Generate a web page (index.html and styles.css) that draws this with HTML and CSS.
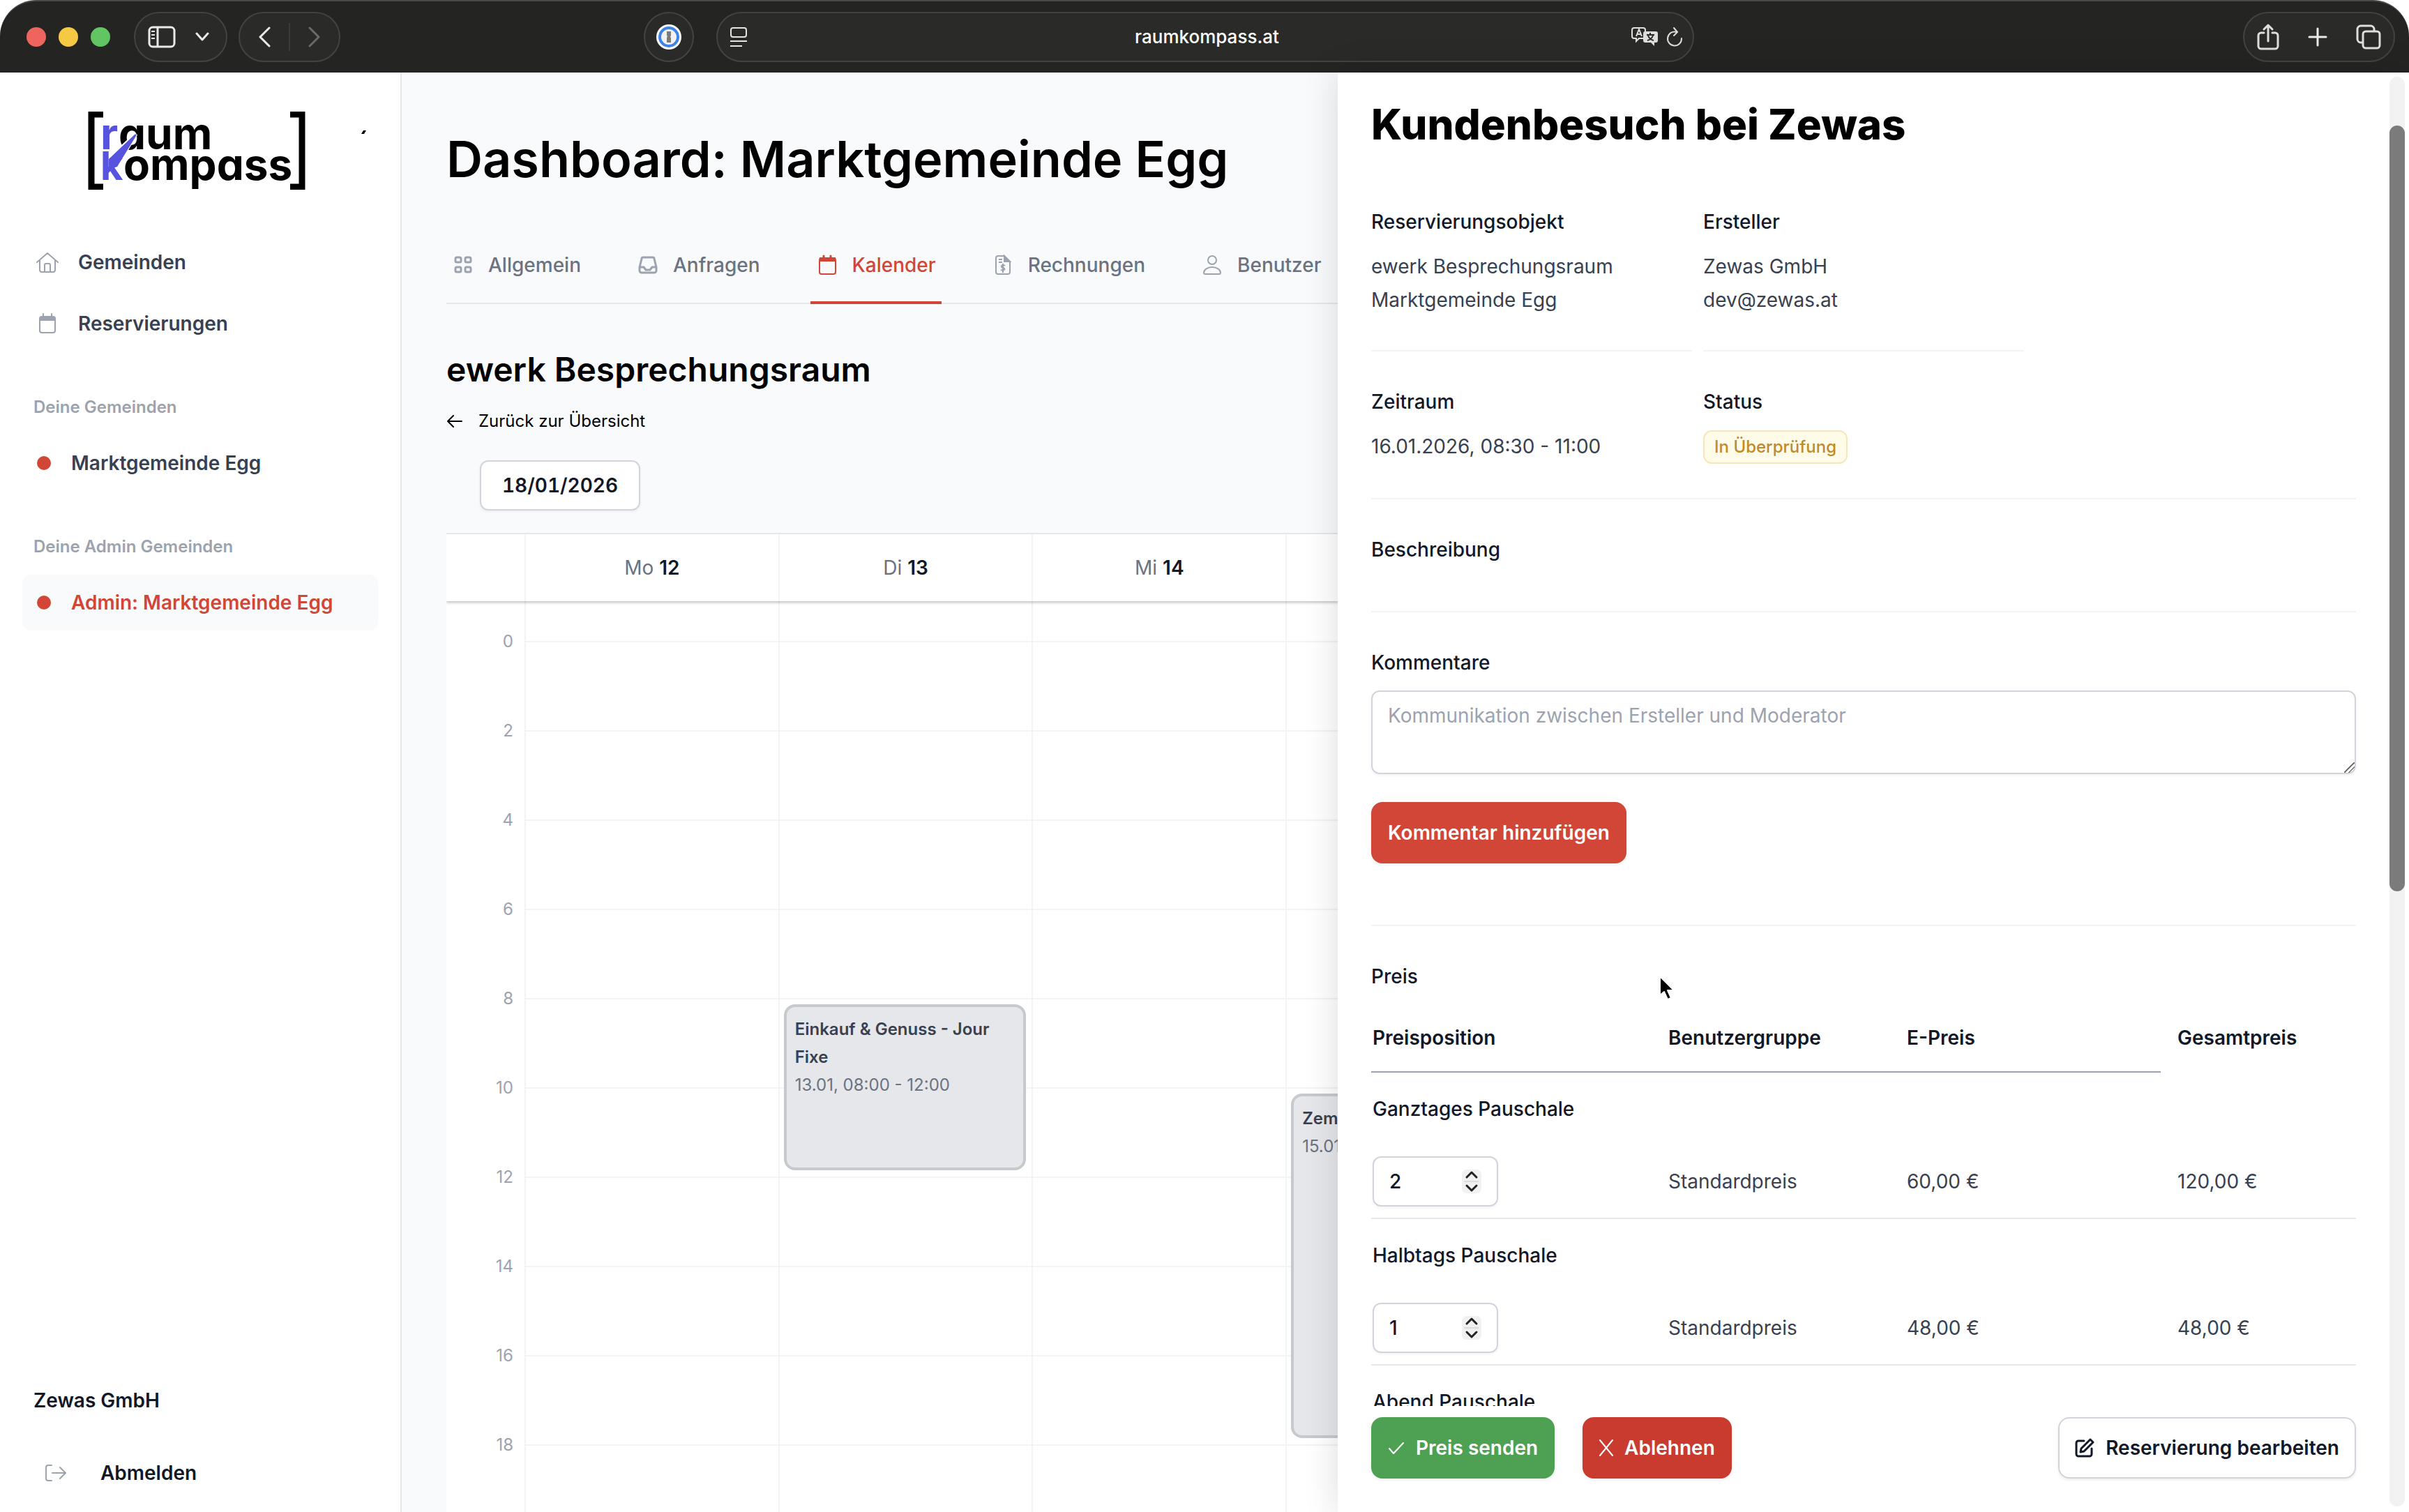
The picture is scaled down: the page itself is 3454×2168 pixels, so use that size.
FILE: index.html
```html
<!DOCTYPE html>
<html lang="de">
<head>
<meta charset="utf-8">
<title>raumkompass.at</title>
<link rel="stylesheet" href="styles.css">
</head>
<body>
<div class="window">
  <header class="toolbar">
    <div class="toolbar-side">
      <div class="lights"><span class="light light-red"></span><span class="light light-yellow"></span><span class="light light-green"></span></div>
      <div class="pill pill-sidebar">
        <svg width="40" height="32" viewBox="0 0 40 32" fill="none" stroke="#e9e9e8" stroke-width="3"><rect x="2" y="2" width="36" height="28" rx="5"/><path d="M14 2v28"/><path d="M5 8h5M5 13h5M5 18h5" stroke-width="2"/></svg>
        <svg width="20" height="14" viewBox="0 0 20 14" fill="none" stroke="#e9e9e8" stroke-width="3" stroke-linecap="round" stroke-linejoin="round"><path d="M2 2l8 9 8-9"/></svg>
      </div>
      <div class="pill pill-nav">
        <svg width="18" height="32" viewBox="0 0 18 32" fill="none" stroke="#e9e9e8" stroke-width="3" stroke-linecap="round" stroke-linejoin="round"><path d="M16 3L3 16l13 13"/></svg>
        <span class="pill-divider"></span>
        <svg width="18" height="32" viewBox="0 0 18 32" fill="none" stroke="#6a6a68" stroke-width="3" stroke-linecap="round" stroke-linejoin="round"><path d="M2 3l13 13L2 29"/></svg>
      </div>
    </div>
    <div class="toolbar-center">
      <div class="pill pill-round">
        <svg width="36" height="36" viewBox="0 0 36 36"><circle cx="18" cy="18" r="18" fill="#fff"/><circle cx="18" cy="18" r="13" fill="#f1f1f1" stroke="#3f83e8" stroke-width="4"/><path d="M15 10h6v6l-1 2 1 1v7h-6v-7l1-2-1-1z" fill="#7b7b7b"/></svg>
      </div>
      <div class="pill address">
        <svg width="24" height="28" viewBox="0 0 24 28" fill="none" stroke="#e4e4e2" stroke-width="2"><rect x="1" y="1" width="22" height="13" rx="3"/><path d="M0 20h24M0 27h17"/></svg>
        <span class="address-text">raumkompass.at</span>
        <span class="address-tools">
          <svg width="38" height="28" viewBox="0 0 38 28"><path d="M4 1h13a3 3 0 0 1 3 3v3M17 16h-6l-4 4v-4H4a3 3 0 0 1-3-3V4a3 3 0 0 1 3-3" fill="none" stroke="#dededc" stroke-width="2"/><path d="M7 13l4-10 4 10M8 10h6" fill="none" stroke="#dededc" stroke-width="2"/><path d="M20 6h15a3 3 0 0 1 3 3v10a3 3 0 0 1-3 3h-2v5l-5-5h-8a3 3 0 0 1-3-3V9a3 3 0 0 1 3-3z" fill="#dededc"/><path d="M22 11h11M27 8v3M24 12c1 3 4 6 8 7M31 12c-1 3-4 6-8 7" fill="none" stroke="#2a2a28" stroke-width="2"/></svg>
          <svg width="24" height="30" viewBox="0 0 24 30" fill="none" stroke="#dededc" stroke-width="2" stroke-linecap="round"><path d="M15 8A10 10 0 1 0 22 17"/><path d="M11 2l5 6-5 5"/></svg>
        </span>
      </div>
    </div>
    <div class="toolbar-side toolbar-right">
      <div class="pill pill-actions">
        <svg width="32" height="38" viewBox="0 0 32 38" fill="none" stroke="#dededc" stroke-width="3" stroke-linecap="round" stroke-linejoin="round"><path d="M10 13H6a4 4 0 0 0-4 4v15a4 4 0 0 0 4 4h20a4 4 0 0 0 4-4V17a4 4 0 0 0-4-4h-4M16 25V3M10 8l6-6 6 6"/></svg>
        <svg width="28" height="28" viewBox="0 0 28 28" stroke="#e9e9e8" stroke-width="3" stroke-linecap="round"><path d="M14 2v24M2 14h24"/></svg>
        <svg width="36" height="36" viewBox="0 0 36 36" fill="none" stroke="#dededc" stroke-width="3"><rect x="10" y="10" width="24" height="24" rx="4"/><path d="M10 26H7a5 5 0 0 1-5-5V7a5 5 0 0 1 5-5h14a5 5 0 0 1 5 5v3"/></svg>
      </div>
    </div>
  </header>

  <div class="app">
    <aside class="sidebar">
      <svg class="logo" width="416" height="112" viewBox="0 0 416 112" role="img" aria-label="raum kompass">
        <path d="M22 4H5v104h17M290 4h17v104h-17" fill="none" stroke="#000" stroke-width="9"/>
        <g class="logo-text">
          <text x="44" y="54">aum</text>
          <text x="51" y="98">ompass</text>
          <path d="M31 67L69 32 41 79z" fill="#fff" stroke="#fff" stroke-width="5"/>
          <text x="18" y="54" fill="#5653df">r</text>
          <text class="logo-k" x="18" y="98" fill="#5653df">k</text>
        </g>
        <path d="M30 68L67 33l3-1-1 3L42 79l-12 4z" fill="#5653df"/>
        <path d="M392 32l3-5h4l-3 5z"/>
      </svg>
      <nav class="side-nav">
        <a class="side-link" href="#"><svg class="side-icon" width="32" height="32" viewBox="0 0 32 32" fill="none" stroke="#9ca3af" stroke-width="2" stroke-linejoin="round" stroke-linecap="round"><path d="M1 16L16 3l15 13M5 13v14a3 3 0 0 0 3 3h16a3 3 0 0 0 3-3V13M12 30V20a2 2 0 0 1 2-2h4a2 2 0 0 1 2 2v10"/></svg>Gemeinden</a>
        <a class="side-link" href="#"><svg class="side-icon" width="32" height="32" viewBox="0 0 32 32" fill="none" stroke="#9ca3af" stroke-width="2"><rect x="5" y="6" width="22" height="23" rx="3"/><path d="M5 9h22" stroke-width="6"/><path d="M10 2v5M22 2v5" stroke-linecap="round"/></svg>Reservierungen</a>
      </nav>
      <section class="side-group">
        <h2 class="side-label">Deine Gemeinden</h2>
        <a class="side-link" href="#"><span class="dot"></span>Marktgemeinde Egg</a>
      </section>
      <section class="side-group">
        <h2 class="side-label">Deine Admin Gemeinden</h2>
        <a class="side-link side-active" href="#"><span class="dot"></span>Admin: Marktgemeinde Egg</a>
      </section>
      <div class="side-footer">
        <p class="account">Zewas GmbH</p>
        <a class="logout" href="#"><svg width="32" height="32" viewBox="0 0 32 32" fill="none" stroke="#9ca3af" stroke-width="2" stroke-linecap="round" stroke-linejoin="round"><path d="M10 5H5a3 3 0 0 0-3 3v16a3 3 0 0 0 3 3h5M11 16h18M22 8l8 8-8 8"/></svg>Abmelden</a>
      </div>
    </aside>

    <main class="main">
      <h1 class="title">Dashboard: Marktgemeinde Egg</h1>
      <nav class="tabs">
        <a class="tab" href="#"><svg width="32" height="32" viewBox="0 0 32 32" fill="none" stroke="#9ca3af" stroke-width="3"><rect x="5" y="5" width="8" height="7" rx="2"/><rect x="19" y="5" width="8" height="7" rx="2"/><rect x="5" y="19" width="8" height="7" rx="2"/><rect x="19" y="19" width="8" height="7" rx="2"/></svg>Allgemein</a>
        <a class="tab" href="#"><svg width="32" height="32" viewBox="0 0 32 32" fill="none" stroke="#9ca3af" stroke-width="3" stroke-linejoin="round"><path d="M9 5h14a2 2 0 0 1 2 2l3 12v5a3 3 0 0 1-3 3H7a3 3 0 0 1-3-3v-5L7 7a2 2 0 0 1 2-2zM4 19h6l3 4h6l3-4h6"/></svg>Anfragen</a>
        <a class="tab tab-active" href="#"><svg width="32" height="32" viewBox="0 0 32 32" fill="none" stroke="#d14636" stroke-width="2"><rect x="5" y="6" width="23" height="23" rx="3"/><path d="M5 8h23" stroke-width="6"/><path d="M11 3v5M21 3v5" stroke-width="3" stroke-linecap="round"/></svg>Kalender</a>
        <a class="tab" href="#"><svg width="32" height="32" viewBox="0 0 32 32" fill="none" stroke="#9ca3af" stroke-width="2"><path d="M9 3h9l8 8v15a3 3 0 0 1-3 3H9a3 3 0 0 1-3-3V6a3 3 0 0 1 3-3z"/><path d="M18 3v8h8z" fill="#9ca3af"/><path d="M10 8h5M10 12h5M19 17c-5-3-7 2-3 3s3 5-3 3M16 14v13"/></svg>Rechnungen</a>
        <a class="tab" href="#"><svg width="32" height="32" viewBox="0 0 32 32" fill="none" stroke="#9ca3af" stroke-width="2" stroke-linejoin="round"><circle cx="16" cy="9" r="6"/><path d="M4 27a12 8 0 0 1 24 0c0 2-2 2-2 2H6s-2 0-2-2z"/></svg>Benutzer</a>
      </nav>
      <h2 class="room">ewerk Besprechungsraum</h2>
      <a class="back" href="#"><svg width="24" height="24" viewBox="0 0 24 24" fill="none" stroke="#000" stroke-width="2" stroke-linecap="round" stroke-linejoin="round"><path d="M22 12H2M10 4l-8 8 8 8"/></svg>Zurück zur Übersicht</a>
      <input class="date" type="text" value="18/01/2026" aria-label="Datum">

      <div class="calendar">
        <div class="cal-head">
          <span></span>
          <span class="day">Mo <b>12</b></span><span class="day">Di <b>13</b></span><span class="day">Mi <b>14</b></span><span class="day">Do <b>15</b></span><span class="day">Fr <b>16</b></span><span class="day">Sa <b>17</b></span><span class="day">So <b>18</b></span>
        </div>
        <div class="cal-body">
          <i class="col col-1"></i><i class="col col-2"></i><i class="col col-3"></i><i class="col col-4"></i><i class="col col-5"></i><i class="col col-6"></i><i class="col col-7"></i>
          <span class="hour">0</span><i class="line"></i>
          <span class="hour">2</span><i class="line"></i>
          <span class="hour">4</span><i class="line"></i>
          <span class="hour">6</span><i class="line"></i>
          <span class="hour">8</span><i class="line"></i>
          <span class="hour">10</span><i class="line"></i>
          <span class="hour">12</span><i class="line"></i>
          <span class="hour">14</span><i class="line"></i>
          <span class="hour">16</span><i class="line"></i>
          <span class="hour">18</span><i class="line"></i>
          <article class="event event-tue"><h3>Einkauf &amp; Genuss - Jour Fixe</h3><p>13.01, 08:00 - 12:00</p></article>
          <article class="event event-thu"><h3>Zem</h3><p>15.01, 10:00 - 18:00</p></article>
        </div>
      </div>
    </main>

    <section class="panel">
      <div class="panel-main">
        <div class="panel-scroll">
          <h2 class="panel-title">Kundenbesuch bei Zewas</h2>
          <dl class="facts">
            <div class="fact"><dt>Reservierungsobjekt</dt><dd>ewerk Besprechungsraum<br>Marktgemeinde Egg</dd></div>
            <div class="fact"><dt>Ersteller</dt><dd>Zewas GmbH<br>dev@zewas.at</dd></div>
          </dl>
          <dl class="facts facts-ruled">
            <div class="fact"><dt>Zeitraum</dt><dd>16.01.2026, 08:30 - 11:00</dd></div>
            <div class="fact"><dt>Status</dt><dd class="status"><span class="badge">In Überprüfung</span></dd></div>
          </dl>
          <div class="block"><h3 class="label">Beschreibung</h3></div>
          <div class="block block-comments">
            <label class="label" for="comment">Kommentare</label>
            <textarea class="comment" id="comment" placeholder="Kommunikation zwischen Ersteller und Moderator"></textarea>
            <button class="btn btn-primary" type="button">Kommentar hinzufügen</button>
          </div>
          <div class="block block-price">
            <h3 class="label">Preis</h3>
            <table class="prices">
              <colgroup><col class="c-item"><col class="c-group"><col class="c-unit"><col></colgroup>
              <thead><tr><th>Preisposition</th><th>Benutzergruppe</th><th>E-Preis</th><th>Gesamtpreis</th></tr></thead>
              <tbody>
                <tr><th colspan="4" id="p1">Ganztages Pauschale</th></tr>
                <tr><td><span class="stepper"><input type="number" value="2" aria-labelledby="p1"><svg width="28" height="34" viewBox="0 0 28 34" fill="none" stroke="#222" stroke-width="3" stroke-linecap="round" stroke-linejoin="round"><rect width="28" height="34" rx="7" fill="#f1f1f1" stroke="none"/><path d="M4 17h20" stroke="#dcdcdc" stroke-width="2"/><path d="M7 11l7-7 7 7M7 23l7 7 7-7"/></svg></span></td><td>Standardpreis</td><td>60,00 €</td><td>120,00 €</td></tr>
                <tr><th colspan="4" id="p2">Halbtags Pauschale</th></tr>
                <tr><td><span class="stepper"><input type="number" value="1" aria-labelledby="p2"><svg width="28" height="34" viewBox="0 0 28 34" fill="none" stroke="#222" stroke-width="3" stroke-linecap="round" stroke-linejoin="round"><rect width="28" height="34" rx="7" fill="#f1f1f1" stroke="none"/><path d="M4 17h20" stroke="#dcdcdc" stroke-width="2"/><path d="M7 11l7-7 7 7M7 23l7 7 7-7"/></svg></span></td><td>Standardpreis</td><td>48,00 €</td><td>48,00 €</td></tr>
                <tr><th colspan="4">Abend Pauschale</th></tr>
              </tbody>
            </table>
          </div>
        </div>
        <footer class="panel-footer">
          <button class="btn btn-send" type="button"><svg width="24" height="24" viewBox="0 0 24 24" fill="none" stroke="#fff" stroke-width="2" stroke-linecap="round" stroke-linejoin="round"><path d="M2 13l6 7L22 5"/></svg>Preis senden</button>
          <button class="btn btn-reject" type="button"><svg width="20" height="24" viewBox="0 0 20 24" fill="none" stroke="#fff" stroke-width="2" stroke-linecap="round"><path d="M1 1l18 22M19 1L1 23"/></svg>Ablehnen</button>
          <button class="btn btn-edit" type="button"><svg width="28" height="28" viewBox="0 0 28 28" fill="none" stroke="#111827" stroke-width="3" stroke-linecap="round" stroke-linejoin="round"><path d="M13 4H5a3 3 0 0 0-3 3v16a3 3 0 0 0 3 3h16a3 3 0 0 0 3-3v-8"/><path d="M22 2l4 4-13 13-5 1 1-5z"/></svg>Reservierung bearbeiten</button>
        </footer>
      </div>
      <div class="scrollbar"><span class="thumb"></span></div>
      <svg class="cursor" width="26" height="38" viewBox="0 0 26 38"><path d="M2 2v27l6-5 5 11 5-2-5-11h9z" fill="#000" stroke="#fff" stroke-width="2" stroke-linejoin="round"/></svg>
    </section>
  </div>
</div>
</body>
</html>
```
FILE: styles.css
```css
* { box-sizing: border-box; margin: 0; padding: 0; }
body { font-family: Inter, "Liberation Sans", sans-serif; font-size: 28px; line-height: 48px; color: #374151; background: #fff; }
a { color: inherit; text-decoration: none; }
button, input, textarea { font: inherit; color: inherit; }
svg { flex: none; display: block; }
.window { height: 100vh; display: flex; flex-direction: column; overflow: hidden; }

/* browser toolbar */
.toolbar { flex: none; height: 104px; display: flex; align-items: center; justify-content: space-between; padding: 0 20px 0 38px; background: #242422; border-top: 2px solid #4a4a48; border-radius: 52px 52px 0 0; }
.toolbar-side { flex: 1; display: flex; align-items: center; gap: 16px; }
.toolbar-right { justify-content: flex-end; }
.lights { display: flex; gap: 18px; margin-right: 18px; }
.light { width: 28px; height: 28px; border-radius: 50%; }
.light-red { background: #ee6560; }
.light-yellow { background: #f5c944; }
.light-green { background: #62c564; }
.pill { display: flex; align-items: center; height: 72px; border: 2px solid #434341; border-radius: 36px; background: #2a2a28; }
.pill-sidebar { width: 134px; padding: 0 18px; gap: 28px; }
.pill-nav { width: 146px; padding: 0 26px; justify-content: space-between; }
.pill-divider { width: 2px; height: 40px; background: #3b3b39; }
.toolbar-center { width: 1506px; display: flex; gap: 32px; margin-right: 120px; }
.pill-round { width: 72px; flex: none; justify-content: center; }
.address { flex: 1; justify-content: space-between; padding: 0 14px 0 18px; }
.address-text { color: #fff; font-size: 26px; font-weight: 500; margin-left: 51px; }
.address-tools { display: flex; align-items: center; gap: 12px; }
.pill-actions { width: 218px; padding: 0 18px; justify-content: space-between; }

.app { flex: 1; min-height: 0; display: flex; position: relative; }

/* sidebar */
.sidebar { flex: none; width: 576px; padding: 56px 32px; border-right: 2px solid #e5e7eb; background: #fff; display: flex; flex-direction: column; font-weight: 600; }
.logo { margin-left: 94px; }
.logo-text { font-family: Inter, sans-serif; font-weight: 700; font-size: 62px; font-feature-settings: "cv11"; }
.logo-k { font-size: 56px; }
.side-nav { display: flex; flex-direction: column; gap: 8px; margin-top: 64px; }
.side-link { height: 80px; display: flex; align-items: center; padding: 0 20px; border-radius: 12px; }
.side-icon { margin-right: 28px; }
.side-group { margin-top: 56px; }
.side-label { font-size: 24px; font-weight: 600; color: #9ca3af; padding-left: 16px; margin-bottom: 16px; }
.dot { width: 20px; height: 20px; border-radius: 50%; background: #d14636; margin: 0 29px 0 1px; }
.side-active { background: #f9fafb; color: #d14636; }
.side-footer { margin-top: auto; padding: 0 16px; color: #111827; }
.account { margin-bottom: 56px; }
.logout { display: flex; align-items: center; gap: 48px; padding-left: 16px; margin-bottom: -24px; }

/* main column */
.main { flex: 1; min-width: 0; overflow: hidden; padding: 84px 156px 0 64px; background: #f9fafc; }
.title { font-size: 72px; line-height: 80px; font-weight: 600; color: #000; }
.tabs { display: flex; gap: 64px; margin-top: 60px; border-bottom: 2px solid #e5e7eb; font-weight: 500; color: #6b7280; }
.tab { display: flex; align-items: center; gap: 20px; padding: 28px 8px; border-bottom: 4px solid transparent; margin-bottom: -2px; }
.tab-active { color: #d14636; border-color: #d14636; }
.room { margin-top: 62px; font-size: 48px; line-height: 64px; font-weight: 600; color: #000; }
.back { display: flex; align-items: center; gap: 22px; margin-top: 22px; font-size: 24px; line-height: 40px; color: #000; }
.date { display: block; width: 230px; height: 72px; margin: 36px 0 32px 48px; border: 2px solid #d1d5db; border-radius: 12px; background: #fff; text-align: center; font-weight: 600; color: #111827; font-variant-numeric: tabular-nums; box-shadow: 0 2px 4px rgba(0, 0, 0, .05); }

.calendar { border-top: 2px solid #e5e7eb; background: #fff; }
.cal-head, .cal-body { display: grid; grid-template-columns: 112px repeat(7, 1fr); }
.cal-head { position: relative; height: 96px; box-shadow: 0 2px 4px rgba(0, 0, 0, .25); clip-path: inset(0 0 -8px 0); color: #6b7280; }
.day { display: flex; align-items: center; justify-content: center; gap: 8px; border-left: 2px solid #f3f4f6; }
.day b { font-weight: 600; color: #111827; }
.cal-body { grid-template-rows: 57px repeat(10, 128px); }
.col { grid-row: 1 / -1; border-left: 2px solid #f3f4f6; }
.col-1 { grid-column: 2; }
.col-2 { grid-column: 3; }
.col-3 { grid-column: 4; }
.col-4 { grid-column: 5; }
.col-5 { grid-column: 6; }
.col-6 { grid-column: 7; }
.col-7 { grid-column: 8; }
.hour { grid-column: 1; margin-top: -23px; padding-right: 16px; text-align: right; font-size: 24px; color: #9ca3af; }
.line { grid-column: 2 / -1; border-top: 2px solid #f3f4f6; }
.hour:nth-of-type(1), .hour:nth-of-type(1) + .line { grid-row: 2; }
.hour:nth-of-type(2), .hour:nth-of-type(2) + .line { grid-row: 3; }
.hour:nth-of-type(3), .hour:nth-of-type(3) + .line { grid-row: 4; }
.hour:nth-of-type(4), .hour:nth-of-type(4) + .line { grid-row: 5; }
.hour:nth-of-type(5), .hour:nth-of-type(5) + .line { grid-row: 6; }
.hour:nth-of-type(6), .hour:nth-of-type(6) + .line { grid-row: 7; }
.hour:nth-of-type(7), .hour:nth-of-type(7) + .line { grid-row: 8; }
.hour:nth-of-type(8), .hour:nth-of-type(8) + .line { grid-row: 9; }
.hour:nth-of-type(9), .hour:nth-of-type(9) + .line { grid-row: 10; }
.hour:nth-of-type(10), .hour:nth-of-type(10) + .line { grid-row: 11; }
.event { margin: 9px 8px; padding: 12px; border: 4px solid #c6c9ce; border-radius: 16px; background: #e5e7eb; font-size: 24px; line-height: 40px; color: #6b7280; }
.event h3 { font-size: 24px; font-weight: 600; color: #374151; }
.event-tue { grid-column: 3; grid-row: 6 / 8; }
.event-thu { grid-column: 5; grid-row: 7 / 11; }

/* reservation drawer, lies over the dashboard */
.panel { position: absolute; top: 0; right: 0; bottom: 0; width: 1536px; display: flex; background: #fff; box-shadow: 0 0 48px rgba(0, 0, 0, .14); }
.panel-main { flex: 1; min-width: 0; display: flex; flex-direction: column; }
.panel-scroll { flex: 1; min-height: 0; overflow: hidden; padding: 38px 48px 0; }
.panel-title { font-size: 60px; line-height: 72px; font-weight: 800; color: #000; margin-bottom: 32px; }
.facts { display: grid; grid-template-columns: repeat(3, 1fr); gap: 16px; }
.fact { padding: 48px 0; border-bottom: 2px solid #f3f4f6; }
.facts-ruled { border-bottom: 2px solid #f3f4f6; }
.facts-ruled .fact { border-bottom: 0; }
dt, .label { display: block; font-size: 28px; font-weight: 500; color: #111827; }
dt { margin-bottom: 16px; }
.status { height: 50px; display: flex; align-items: center; }
.badge { padding: 0 14px; border: 2px solid #f5e6bb; border-radius: 12px; background: #fefce8; color: #c08a2e; font-size: 24px; line-height: 44px; font-weight: 500; }
.block { padding: 48px 0; border-bottom: 2px solid #f3f4f6; }
.block .label { margin-bottom: 16px; }
.block-comments { padding-bottom: 88px; }
.block-price { border-bottom: 0; }
.comment { display: block; width: 100%; height: 120px; margin-bottom: 40px; padding: 10px 22px; border: 2px solid #d1d5db; border-radius: 12px; box-shadow: 0 2px 4px rgba(0, 0, 0, .05); }
.comment::placeholder { color: #9ca3af; }
.comment::-webkit-resizer { background: linear-gradient(135deg, transparent 46%, #777 46%, #777 54%, transparent 54%, transparent 68%, #777 68%, #777 76%, transparent 76%); }
.btn { height: 88px; padding: 0 24px; display: flex; align-items: center; gap: 16px; border: 0; border-radius: 16px; font-weight: 600; color: #fff; box-shadow: 0 2px 4px rgba(0, 0, 0, .08); }
.btn-primary { background: #d14636; }
.btn-send { background: #4ea152; margin-right: 40px; }
.btn-reject { background: #c93a2f; }
.btn-edit { margin-left: auto; padding: 0 22px; background: #fff; border: 2px solid #d1d5db; color: #111827; }

.prices { width: 100%; table-layout: fixed; border-collapse: separate; border-spacing: 0; text-align: left; }
.c-item { width: 424px; }
.c-group { width: 342px; }
.c-unit { width: 366px; }
.prices th { color: #111827; }
.prices thead th { height: 98px; padding: 0 2px; border-bottom: 2px solid #9ca3af; font-weight: 600; }
.prices thead th:last-child { border-bottom-color: transparent; }
.prices tbody th { padding: 28px 2px; font-weight: 500; }
.prices td { padding: 16px 2px; border-bottom: 2px solid #e5e7eb; }
.prices tr :nth-child(4) { padding-left: 24px; }
.stepper { display: flex; align-items: center; width: 180px; height: 72px; padding: 0 22px; border: 2px solid #d1d5db; border-radius: 12px; color: #111827; font-weight: 500; box-shadow: 0 2px 4px rgba(0, 0, 0, .05); }
.stepper input { flex: 1; min-width: 0; border: 0; background: none; appearance: textfield; }
.stepper input::-webkit-inner-spin-button { appearance: none; }

.panel-footer { display: flex; padding: 16px 48px 48px; background: #fff; }
.scrollbar { flex: none; width: 22px; margin: 6px 6px 8px 0; padding-top: 70px; border-radius: 12px; background: #f2f2f2; }
.thumb { display: block; height: 1098px; border-radius: 12px; background: #7b7b7b; }
.cursor { position: absolute; left: 460px; top: 1294px; }
```
